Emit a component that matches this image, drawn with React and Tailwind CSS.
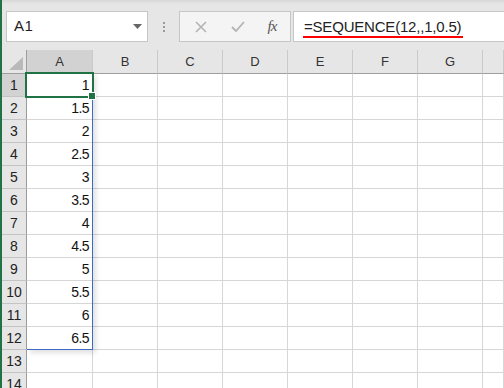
import React from 'react';

const cols = ['A', 'B', 'C', 'D', 'E', 'F', 'G', 'H'];
const values = ['1', '1.5', '2', '2.5', '3', '3.5', '4', '4.5', '5', '5.5', '6', '6.5'];
const rowCount = 14;

function TopBar() {
  return (
    <div className="h-[50px] shrink-0 flex items-start pt-[11px] pl-[4px] bg-gradient-to-b from-[#d8d8d8] via-[#e6e6e6] via-[8%] to-[#e6e6e6]">
      {/* name box */}
      <div className="w-[142px] h-[31px] bg-white border border-[#c6c6c6] flex items-center justify-between pl-[7px] pr-[5px]">
        <span className="text-[15px] text-[#222] tracking-[0.5px]">A1</span>
        <svg width="9" height="5" viewBox="0 0 9 5">
          <polygon points="0,0 9,0 4.5,5" fill="#666" />
        </svg>
      </div>

      {/* grip dots */}
      <div className="w-[31px] h-[31px] flex flex-col items-center justify-center gap-[2px]">
        <div className="w-[2px] h-[2px] bg-[#9a9a9a]" />
        <div className="w-[2px] h-[2px] bg-[#9a9a9a]" />
        <div className="w-[2px] h-[2px] bg-[#9a9a9a]" />
      </div>

      {/* cancel / enter / fx */}
      <div className="w-[112px] h-[31px] bg-[#f4f4f4] border border-[#c6c6c6] flex items-center">
        <div className="w-[37px] flex justify-center pl-[4px]">
          <svg width="12" height="12" viewBox="0 0 12 12">
            <path d="M1 1 L11 11 M11 1 L1 11" stroke="#b4b4b4" strokeWidth="1.6" />
          </svg>
        </div>
        <div className="w-[37px] flex justify-center pl-[4px]">
          <svg width="14" height="11" viewBox="0 0 14 11">
            <path d="M1 6 L5 10 L13 1" stroke="#b4b4b4" strokeWidth="1.8" fill="none" />
          </svg>
        </div>
        <div className="w-[36px] flex justify-center">
          <span className="font-['Liberation_Serif'] italic text-[15px] text-[#555] tracking-[-1px]">fx</span>
        </div>
      </div>

      {/* formula box */}
      <div className="ml-[2px] flex-1 h-[31px] bg-white border border-r-0 border-[#c6c6c6] flex items-center pl-[10px]">
        <span className="text-[15px] text-[#222] leading-none relative tracking-[-0.2px]">
          =SEQUENCE(12,,1,0.5)
          <span className="absolute left-[-1px] right-[-2px] bottom-[-4px] h-[2px] bg-[#ff0000]" />
        </span>
      </div>
    </div>
  );
}

function Sheet() {
  return (
    <div className="relative grid grid-cols-[25px_66px_repeat(6,65px)_1fr] grid-rows-[24px] auto-rows-[23px]">
      {/* corner */}
      <div className="bg-[#e6e6e6] border-r border-b border-r-[#9e9e9e] border-b-[#9e9e9e] flex items-end justify-end pr-[3px] pb-[3px]">
        <svg width="14" height="13" viewBox="0 0 14 13">
          <polygon points="14,0 14,13 0,13" fill="#b9b9b9" />
        </svg>
      </div>
      {cols.map((c) => (
        <div
          key={c}
          className={`${c === 'A' ? 'bg-[#d2d2d2]' : 'bg-[#e6e6e6]'} border-r border-b border-r-[#cacaca] border-b-[#9e9e9e] flex items-center justify-center text-[13px] text-[#333]`}
        >
          {c !== 'H' && c}
        </div>
      ))}

      {Array.from({ length: rowCount }).map((_, r) => (
        <React.Fragment key={r}>
          <div
            className={`${r === 0 ? 'bg-[#d2d2d2]' : 'bg-[#e6e6e6]'} border-r border-b border-r-[#9e9e9e] border-b-[#c4c4c4] flex items-center justify-center text-[14px] text-[#222]`}
          >
            {r + 1}
          </div>
          {cols.map((c) => (
            <div
              key={c}
              className="border-r border-b border-[#d6d6d6] flex items-center justify-end pr-[3px] text-[14px] text-[#111] tracking-[-0.6px]"
            >
              {c === 'A' && values[r]}
            </div>
          ))}
        </React.Fragment>
      ))}

      {/* spill range outline */}
      <div className="absolute left-[25px] top-[23px] w-[66px] h-[277px] border border-l-0 border-[#3a6bc5] shadow-[3px_3px_5px_rgba(0,0,0,0.12)] pointer-events-none" />

      {/* active cell */}
      <div className="absolute left-[23px] top-[22px] w-[69px] h-[26px] border-2 border-[#217346] pointer-events-none" />
      <div className="absolute left-[86px] top-[42px] w-[8px] h-[8px] bg-[#217346] border border-white pointer-events-none" />
    </div>
  );
}

export default function App() {
  return (
    <div className="w-[504px] h-[388px] overflow-hidden bg-white flex font-['Liberation_Sans',sans-serif]">
      <div className="w-[2px] shrink-0 bg-[#217346]" />
      <div className="flex-1 flex flex-col min-w-0">
        <TopBar />
        <Sheet />
      </div>
    </div>
  );
}
